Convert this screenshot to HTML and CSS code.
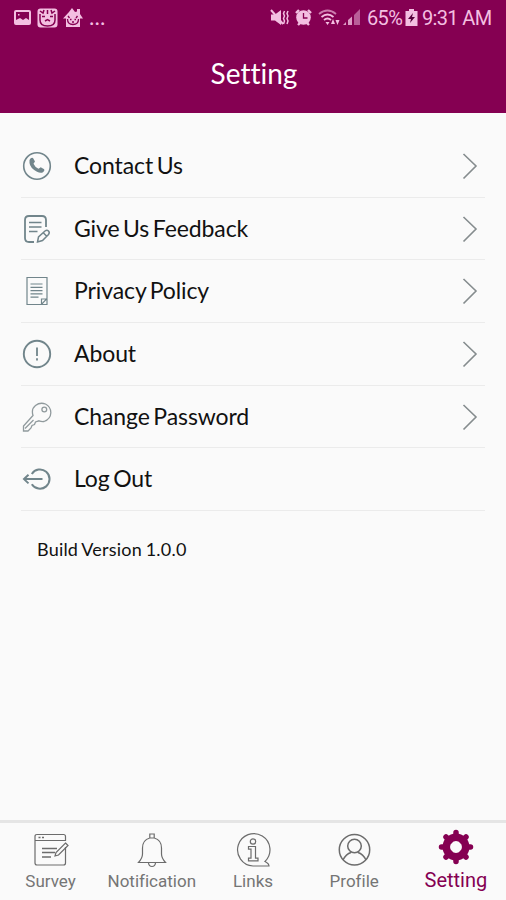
FILE: index.html
```
<!DOCTYPE html>
<html lang="en">
<head>
    <meta charset="utf-8">
    <title>Setting</title>
    <link rel="stylesheet" href="styles.css">
</head>
<body>
    <header class="header">
        <div class="status">
            <svg class="status-left" width="74" height="22" viewBox="0 0 74 22">
                <rect x="1" y="4" width="15" height="13" rx="1" fill="none" stroke="#f3bfe1" stroke-width="2"/>
                <path d="M2 16v-3l4-2 3 2 3-2 3 2v3z" fill="#f3bfe1"/>
                <path d="M4 7h1.500v1.500H4z" fill="#f3bfe1"/>
                <rect x="23.500" y="1.500" width="20" height="19" rx="3" fill="#f3bfe1"/>
                <path d="M26 4l3 2 1-3M41 4l-3 2-1-3M33.500 3v4M26 7v6q0 6 7.500 6t7.500-6V7" fill="none" stroke="#850052" stroke-width="1.500"/>
                <path d="M28 9.500h3M36 9.500h3M31 14l2.500-1.500L36 14" fill="none" stroke="#850052" stroke-width="1.500"/>
                <path d="M49 11.500L55 5l3-4 3 4 2-.5V2h3v5l3 4.500h-3V20H52v-8.500z" fill="#f3bfe1"/>
                <path d="M54 9l1.500 2M63.500 9L62 11M53.500 12q0 5.500 5.500 5.500t5.500-5.500M56 12.500h1.500M60.500 12.500H62M58 15h2" fill="none" stroke="#850052" stroke-width="1.300"/>
            </svg>
            <span class="dots">...</span>
            <svg class="status-right" width="92" height="20" viewBox="0 0 92 20">
                <!-- muted -->
                <path d="M1 6.500h4l6-4.500v15l-6-4.500H1z" fill="#f3bfe1"/>
                <path d="M1 2l12 14" stroke="#f3bfe1" stroke-width="2"/>
                <path d="M14.500 3l-1 2.500 1 2.500-1 2.500 1 2.500-1 3M18 3l-1 2.500 1 2.500-1 2.500 1 2.500-1 3" fill="none" stroke="#f3bfe1" stroke-width="1.500"/>
                <!-- alarm -->
                <circle cx="33.500" cy="9.500" r="7.300" fill="#f3bfe1"/>
                <path d="M26 5l3-3M41 5l-3-3M28 17l2-2M39 17l-2-2" stroke="#f3bfe1" stroke-width="2.400"/>
                <path d="M33.500 5v5h4" fill="none" stroke="#850052" stroke-width="1.300"/>
                <!-- wifi -->
                <g fill="none" stroke="#f3bfe1" stroke-width="1.800">
                    <path d="M49 6q8.500-7 17 0" opacity=".65"/>
                    <path d="M51.500 9q6-5 12 0M54 12q3.500-3 7 0"/>
                </g>
                <path d="M55.500 14h4l-2 3zM61 16l2-5 2 5zM65.500 12l2 5 2-5z" fill="#f3bfe1"/>
                <!-- signal -->
                <path d="M73 17l3-3v3zM78 17v-5l4-3.500V17z" fill="#dd9dc5"/>
                <path d="M84 17V7l6-6v16z" fill="#b95e98"/>
            </svg>
            <span class="percent">65%</span>
            <svg class="battery" width="13" height="18" viewBox="0 0 13 18">
                <path d="M4 0h5v2h3.500v15H.5V2H4z" fill="#f3bfe1"/>
                <path d="M8 4L3 10h3l-1 4 5-6H7z" fill="#55003a"/>
            </svg>
            <span class="time">9:31 AM</span>
        </div>
        <h1 class="title">Setting</h1>
    </header>

    <main class="content">
        <ul class="menu">
            <li class="item">
                <svg class="icon" viewBox="0 0 30 30">
                    <circle cx="15" cy="15" r="13.300"/>
                    <path class="solid" d="M7.500 9q1.500-3 3.500-2l2 3.500-1.500 2.200q1.500 3.500 5 5l2.200-1.500 3.500 2q.8 1.500-1.200 3-2.500 1.500-6-.5Q8 17 7.500 12z"/>
                </svg>
                <span class="label">Contact Us</span>
                <svg class="arrow" viewBox="0 0 16 28"><path d="M1.500 2L14 14 1.500 26.500"/></svg>
            </li>
            <li class="item">
                <svg class="icon" viewBox="0 0 30 30">
                    <path d="M24 13V6q0-4-4-4H7Q3 2 3 6v18q0 4 4 4h5" stroke-width="1.800"/>
                    <path d="M7 8.500h12.500M7 13h12.500M7 17.500h8.500" stroke-width="1.500"/>
                    <path d="M15.500 28l1-5 6.500-6q2-1.500 3.500 0t0 3.500l-6 6zM21.500 19l3.500 3.500" stroke-width="1.500"/>
                </svg>
                <span class="label">Give Us Feedback</span>
                <svg class="arrow" viewBox="0 0 16 28"><path d="M1.500 2L14 14 1.500 26.500"/></svg>
            </li>
            <li class="item">
                <svg class="icon" viewBox="0 0 30 30">
                    <path d="M5 1.500h20v21l-5.500 6H5zM19.500 28.500V23H25M6 28.500h19v-6" stroke-width="1.200"/>
                    <path d="M8.500 8h12M8.500 11.300h12M8.500 14.600h12M8.500 17.900h12M8.500 21.200h8" stroke-width="1.200"/>
                </svg>
                <span class="label">Privacy Policy</span>
                <svg class="arrow" viewBox="0 0 16 28"><path d="M1.500 2L14 14 1.500 26.500"/></svg>
            </li>
            <li class="item">
                <svg class="icon" viewBox="0 0 30 30">
                    <circle cx="15" cy="15" r="13.200" stroke-width="1.900"/>
                    <path d="M15 8.500v8.500M15 19.300v2.200" stroke-width="1.800"/>
                </svg>
                <span class="label">About</span>
                <svg class="arrow" viewBox="0 0 16 28"><path d="M1.500 2L14 14 1.500 26.500"/></svg>
            </li>
            <li class="item">
                <svg class="icon thin" viewBox="0 0 30 30">
                    <path d="M11 13.500Q9 7 13.500 3.500t10-1.500Q29 5 28.800 11T22 19.500q-2.500.3-5-.7L13.500 20l-1 2.500-2.500 1-1 2.500L6 29H1.500v-5z"/>
                    <circle cx="22.300" cy="7.500" r="2.400"/>
                    <path d="M3 26.500l8.500-8.500"/>
                </svg>
                <span class="label">Change Password</span>
                <svg class="arrow" viewBox="0 0 16 28"><path d="M1.500 2L14 14 1.500 26.500"/></svg>
            </li>
            <li class="item">
                <svg class="icon" viewBox="0 0 30 30">
                    <path d="M9.800 10A9.600 9.600 0 1 1 9.800 20.200M20.500 15.100H2M6.500 10.800L2 15.100l4.500 4.300" stroke-width="2"/>
                </svg>
                <span class="label">Log Out</span>
            </li>
        </ul>
        <p class="version">Build Version 1.0.0</p>
    </main>

    <nav class="tabs">
        <a class="tab">
            <svg class="tab-icon" viewBox="0 0 36 36">
                <path d="M32.500 15v16q0 2-2 2H4q-2 0-2-2V4.500q0-2 2-2h26.500q2 0 2 2V9M2.500 8.500H32" />
                <path d="M5.500 5.500h2M9 5.500h2M9 16.500h15M9 20.500h13M9 25h9" stroke-width="1.500"/>
                <path d="M32.500 11l2.500 2.500L25.500 23l-3.500 1 1-3.500z"/>
            </svg>
            <span class="tab-label">Survey</span>
        </a>
        <a class="tab">
            <svg class="tab-icon" viewBox="0 0 36 36">
                <path d="M15.800 6V2h4.400v4M15.800 6Q8.500 8 8.500 16v6q0 4-4 8.500h27q-4-4.500-4-8.500v-6q0-8-7.300-10zM14.500 31q.5 3.500 3.500 3.500t3.500-3.500"/>
            </svg>
            <span class="tab-label">Notification</span>
        </a>
        <a class="tab">
            <svg class="tab-icon" viewBox="0 0 36 36">
                <path d="M30 29.500A16.200 16.200 0 1 0 18 34h16q0-2.500-4-4.500z"/>
                <circle cx="18" cy="9.500" r="2.700"/>
                <path d="M13.500 14.500h7v11.700H23v2.600h-9.500v-2.600H16v-9h-2.500z"/>
            </svg>
            <span class="tab-label">Links</span>
        </a>
        <a class="tab">
            <svg class="tab-icon" viewBox="0 0 36 36">
                <circle cx="18.500" cy="17.800" r="15.200" stroke-width="1.500"/>
                <circle cx="18.500" cy="14" r="6.800" stroke-width="1.500"/>
                <path d="M7 28q3-6 8-7.500M30 28q-3-6-8-7.500" stroke-width="1.500"/>
            </svg>
            <span class="tab-label">Profile</span>
        </a>
        <a class="tab active">
            <svg class="tab-icon" viewBox="0 0 36 36">
                <circle cx="18" cy="18" r="9.700"/>
                <path class="teeth" d="M18 3.500v5M18 27.500v5M3.500 18h5M27.500 18h5M8 8l4 4M24 24l4 4M28 8l-4 4M12 24l-4 4"/>
            </svg>
            <span class="tab-label">Setting</span>
        </a>
    </nav>
</body>
</html>
```

FILE: styles.css
```
* {
    box-sizing: border-box;
}
body {
    display: flex;
    flex-direction: column;
    height: 100vh;
    margin: 0;
    background-color: #fafafa;
    font-family: Lato, "Liberation Sans", sans-serif;
    font-variant-ligatures: none;
    color: #111;
}
svg {
    display: block;
    flex: none;
}
.header {
    height: 113px;
    background-color: #850052;
    color: #fff;
}
.status {
    display: flex;
    align-items: center;
    height: 36px;
    padding-left: 14px;
    font-family: Roboto, sans-serif;
    font-size: 20px;
    letter-spacing: -0.650px;
    color: #f3bfe1;
    white-space: nowrap;
}
.dots {
    width: 20px;
    margin-left: 1px;
    font-weight: 500;
    letter-spacing: 0;
}
.status-right {
    margin-left: 161px;
}
.percent {
    width: 38px;
    margin-left: 5px;
}
.time {
    margin-left: 4px;
}
.title {
    margin: 20px 0 0 2px;
    font-size: 28px;
    font-weight: 400;
    line-height: 34px;
    text-align: center;
}
.content {
    flex: 1;
    padding: 22px 21px 0;
}
.menu {
    margin: 0;
    padding: 0;
    list-style: none;
}
.item {
    display: flex;
    align-items: center;
    height: 62.700px;
    padding: 0 7px 0 1px;
    border-bottom: 1px solid #ebebeb;
}
.icon {
    width: 30px;
    height: 30px;
    fill: none;
    stroke: #71858b;
    stroke-width: 1.600;
}
.icon .solid {
    fill: #71858b;
    stroke: none;
}
.thin {
    stroke: #909a9d;
    stroke-width: 1.300;
}
.label {
    flex: 1;
    margin: 0 0 2px 22px;
    font-size: 23px;
    line-height: 28px;
    letter-spacing: -0.100px;
    word-spacing: -2.200px;
}
.arrow {
    width: 16px;
    height: 28px;
    fill: none;
    stroke: #858c8e;
    stroke-width: 1.600;
}
.version {
    margin: 27px 0 0 16px;
    font-size: 18px;
    line-height: 22px;
    letter-spacing: 0.200px;
    word-spacing: -1px;
}
.tabs {
    display: grid;
    grid-template-columns: repeat(5, 1fr);
    height: 80px;
    border-top: 3px solid #e5e5e5;
}
.tab {
    display: flex;
    flex-direction: column;
    align-items: center;
    padding-top: 9px;
    font-family: Roboto, sans-serif;
    font-size: 17px;
    color: #757575;
}
.tab-icon {
    width: 36px;
    height: 36px;
    fill: none;
    stroke: #6c6c6c;
    stroke-width: 1.200;
}
.tab-label {
    margin-top: 3px;
    line-height: 20px;
}
.active {
    padding: 6px 0 0 1px;
    font-size: 20px;
    color: #850052;
}
.active .tab-icon {
    stroke: #850052;
    stroke-width: 7.500;
}
.active .teeth {
    stroke-width: 5.500;
    stroke-linecap: round;
}
.active .tab-label {
    margin-top: 5px;
}
```
